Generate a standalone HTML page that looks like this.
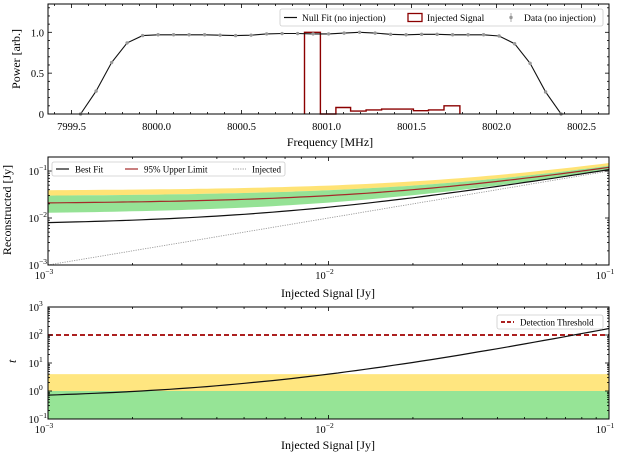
<!DOCTYPE html>
<html><head><meta charset="utf-8"><style>
html,body{margin:0;padding:0;background:#fff;}
svg{display:block;font-family:"Liberation Serif",serif;}
</style></head><body>
<svg id="s" width="623" height="456" viewBox="0 0 623 456" xmlns="http://www.w3.org/2000/svg">
<rect width="623" height="456" fill="#fff"/>
<g id="g"></g>
</svg>
<script>
var g=document.getElementById('g'),h='';
function ln(x1,y1,x2,y2,st){h+='<line x1="'+x1+'" y1="'+y1+'" x2="'+x2+'" y2="'+y2+'" '+st+'/>';}
function tx(x,y,t,st){h+='<text x="'+x+'" y="'+y+'" '+st+'>'+t+'</text>';}
function pl(pts,st){h+='<polyline fill="none" points="'+pts.map(function(p){return p[0].toFixed(1)+','+p[1].toFixed(1)}).join(' ')+'" '+st+'/>';}
function pg(pts,st){h+='<polygon points="'+pts.map(function(p){return p[0].toFixed(1)+','+p[1].toFixed(1)}).join(' ')+'" '+st+'/>';}
var L=48,R=609,K='stroke="#000" stroke-width="0.8"';
// ---------- Panel 1 ----------
var T1=4,B1=114;
function X1(f){return 156.5+(f-8000)*170;}
function Y1(v){return 114-81.7*v;}
// ticks
for(var f=7999.4;f<=8002.65;f+=0.1){var x=X1(f),maj=Math.abs(Math.round(f*2)/2-f)<0.01;var l=maj?4:2;ln(x,B1,x,B1-l,K);ln(x,T1,x,T1+l,K);}
[7999.5,8000.0,8000.5,8001.0,8001.5,8002.0,8002.5].forEach(function(f){tx(X1(f),130,f.toFixed(1),'font-size="10.5" text-anchor="middle"');});
for(var v=0;v<=1.31;v+=0.1){var y=Y1(v),maj=Math.abs(Math.round(v*2)/2-v)<0.01;var l=maj?4:2;ln(L,y,L+l,y,K);ln(R,y,R-l,y,K);}
tx(44,Y1(0)+4,'0','font-size="10.5" text-anchor="end"');tx(44,Y1(0.5)+4,'0.5','font-size="10.5" text-anchor="end"');tx(44,Y1(1)+4,'1.0','font-size="10.5" text-anchor="end"');
tx(330,146,'Frequency [MHz]','font-size="12" text-anchor="middle"');
h+='<text transform="translate(20,59) rotate(-90)" font-size="12" text-anchor="middle">Power [arb.]</text>';
// red step
var rx=[304.5,320.4,335.9,350.6,366.1,381.6,397.5,413.4,428.5,444,459.9];
var rv=[1.0,0,0.08,0.035,0.05,0.06,0.06,0.04,0.05,0.1];
var rp=[];for(var i=0;i<rv.length;i++){rp.push([rx[i],Y1(rv[i])]);rp.push([rx[i+1],Y1(rv[i])]);}
rp.unshift([rx[0],Y1(0)]);rp.push([rx[10],Y1(0)]);
pl(rp,'stroke="#8b0000" stroke-width="1.4"');
// null fit
var dv=[0,0.28,0.63,0.87,0.96,0.97,0.97,0.97,0.97,0.965,0.96,0.965,0.98,0.985,0.985,0.98,0.98,0.99,1.0,0.99,0.975,0.97,0.975,0.975,0.97,0.97,0.97,0.955,0.86,0.62,0.27,0];
var np=[[L,Y1(0)]];var dp=[];for(var i=0;i<dv.length;i++){var x=80.6+i*15.5;np.push([x,Y1(dv[i])]);dp.push([x,Y1(dv[i])]);}
np.push([R,Y1(0)]);
pl(np,'stroke="#111" stroke-width="1.1"');
dp.forEach(function(p){h+='<circle cx="'+p[0]+'" cy="'+p[1]+'" r="1.7" fill="#999"/>';});
h+='<rect x="'+L+'" y="'+T1+'" width="'+(R-L)+'" height="'+(B1-T1)+'" fill="none" stroke="#000" stroke-width="1"/>';
// legend 1
h+='<rect x="280" y="9" width="323" height="17" rx="2" fill="#fff" fill-opacity="0.85" stroke="#ccc" stroke-width="0.8"/>';
ln(284,17.5,297,17.5,'stroke="#111" stroke-width="1.2"');tx(302,21,'Null Fit (no injection)','font-size="9.5"');
h+='<rect x="408" y="13.5" width="14" height="8" fill="none" stroke="#8b0000" stroke-width="1.3"/>';tx(427,21,'Injected Signal','font-size="9.5"');
ln(511,13,511,22,'stroke="#999" stroke-width="0.8"');h+='<circle cx="511" cy="17.5" r="1.7" fill="#999"/>';tx(524,21,'Data (no injection)','font-size="9.5"');
// ---------- log helpers ----------
function XL(s){return L+280.5*(Math.log10(s)+3);}
function logx(T,B){for(var d=-3;d<=-1;d++){for(var m=1;m<10;m++){var s=m*Math.pow(10,d);if(s>0.1001)break;var x=XL(s),l=m==1?4:2;ln(x,B,x,B-l,K);ln(x,T,x,T+l,K);}}
 [-3,-2,-1].forEach(function(e){h+='<text x="'+(XL(Math.pow(10,e))-4)+'" y="'+(B+14)+'" font-size="10.5" text-anchor="middle">10<tspan font-size="7.5" dy="-5">&#8722;'+(-e)+'</tspan></text>';});}
function logy(Yf,d0,d1,T,B){for(var d=d0;d<=d1;d++){for(var m=1;m<10;m++){var v=m*Math.pow(10,d);var y=Yf(v);if(y<T-0.1||y>B+0.1)continue;var l=m==1?4:2;ln(L,y,L+l,y,K);ln(R,y,R-l,y,K);}}}
function ylab(y,e){h+='<text x="39" y="'+(y+4)+'" font-size="10.5" text-anchor="end">10</text><text x="39" y="'+(y-1)+'" font-size="7.5">'+(e<0?'&#8722;'+(-e):e)+'</text>';}
// ---------- Panel 2 ----------
var T2=157,B2=265;
function Y2(v){return 265-47*(Math.log10(v)+3);}
function curve(fn,Y){var p=[];for(var i=0;i<=60;i++){var s=Math.pow(10,-3+2*i/60);p.push([XL(s),Y(fn(s))]);}return p;}
var yu=curve(function(s){return 0.038+1.1*s},Y2),yl=curve(function(s){return 0.029+1.0*s},Y2),gl=curve(function(s){return 0.012+0.93*s},Y2);
pg(yu.concat(yl.slice().reverse()),'fill="#ffe066" fill-opacity="0.9"');
pg(yl.concat(gl.slice().reverse()),'fill="#8fe08f" fill-opacity="0.95"');
pl(curve(function(s){return s},Y2),'stroke="#999" stroke-width="0.9" stroke-dasharray="1.2,1.2"');
pl(curve(function(s){return 0.02+s},Y2),'stroke="#a52a2a" stroke-width="1.2"');
pl(curve(function(s){return 0.007+s},Y2),'stroke="#111" stroke-width="1.2"');
logx(T2,B2);logy(Y2,-3,-1,T2,B2);
ylab(Y2(0.1),-1);ylab(Y2(0.01),-2);ylab(Y2(0.001),-3);
tx(328,297,'Injected Signal [Jy]','font-size="12" text-anchor="middle"');
h+='<text transform="translate(11,210) rotate(-90)" font-size="12" text-anchor="middle">Reconstructed [Jy]</text>';
h+='<rect x="'+L+'" y="'+T2+'" width="'+(R-L)+'" height="'+(B2-T2)+'" fill="none" stroke="#000" stroke-width="1"/>';
h+='<rect x="52" y="162" width="233" height="14" rx="2" fill="#fff" fill-opacity="0.85" stroke="#ccc" stroke-width="0.8"/>';
ln(56,169,69,169,'stroke="#111" stroke-width="1.2"');tx(75,172.5,'Best Fit','font-size="9"');
ln(125,169,138,169,'stroke="#a52a2a" stroke-width="1.2"');tx(144,172.5,'95% Upper Limit','font-size="9"');
ln(233,169,246,169,'stroke="#999" stroke-width="0.9" stroke-dasharray="1.2,1.2"');tx(252,172.5,'Injected','font-size="9"');
// ---------- Panel 3 ----------
var T3=307,B3=419;
function Y3(v){return 391-28*Math.log10(v);}
h+='<rect x="'+L+'" y="'+Y3(4)+'" width="'+(R-L)+'" height="'+(Y3(1)-Y3(4))+'" fill="#ffe680"/>';
h+='<rect x="'+L+'" y="'+Y3(1)+'" width="'+(R-L)+'" height="'+(B3-Y3(1))+'" fill="#96e496"/>';
ln(L,Y3(100),R,Y3(100),'stroke="#a00000" stroke-width="1.8" stroke-dasharray="5,3"');
pl(curve(function(s){return 0.5+200*s+15000*s*s},Y3),'stroke="#111" stroke-width="1.2"');
logx(T3,B3);logy(Y3,-1,3,T3,B3);
[3,2,1,0,-1].forEach(function(e){ylab(Y3(Math.pow(10,e)),e);});
tx(328,449,'Injected Signal [Jy]','font-size="12" text-anchor="middle"');
h+='<text x="13" y="366" font-size="12" font-style="italic" transform="rotate(-90,13,363)">t</text>';
h+='<rect x="'+L+'" y="'+T3+'" width="'+(R-L)+'" height="'+(B3-T3)+'" fill="none" stroke="#000" stroke-width="1"/>';
h+='<rect x="497" y="315" width="106" height="14" rx="2" fill="#fff" fill-opacity="0.85" stroke="#ccc" stroke-width="0.8"/>';
ln(501,322,514,322,'stroke="#a00000" stroke-width="1.8" stroke-dasharray="4,2"');tx(520,325.5,'Detection Threshold','font-size="9"');
g.innerHTML=h;
</script>
</body></html>
